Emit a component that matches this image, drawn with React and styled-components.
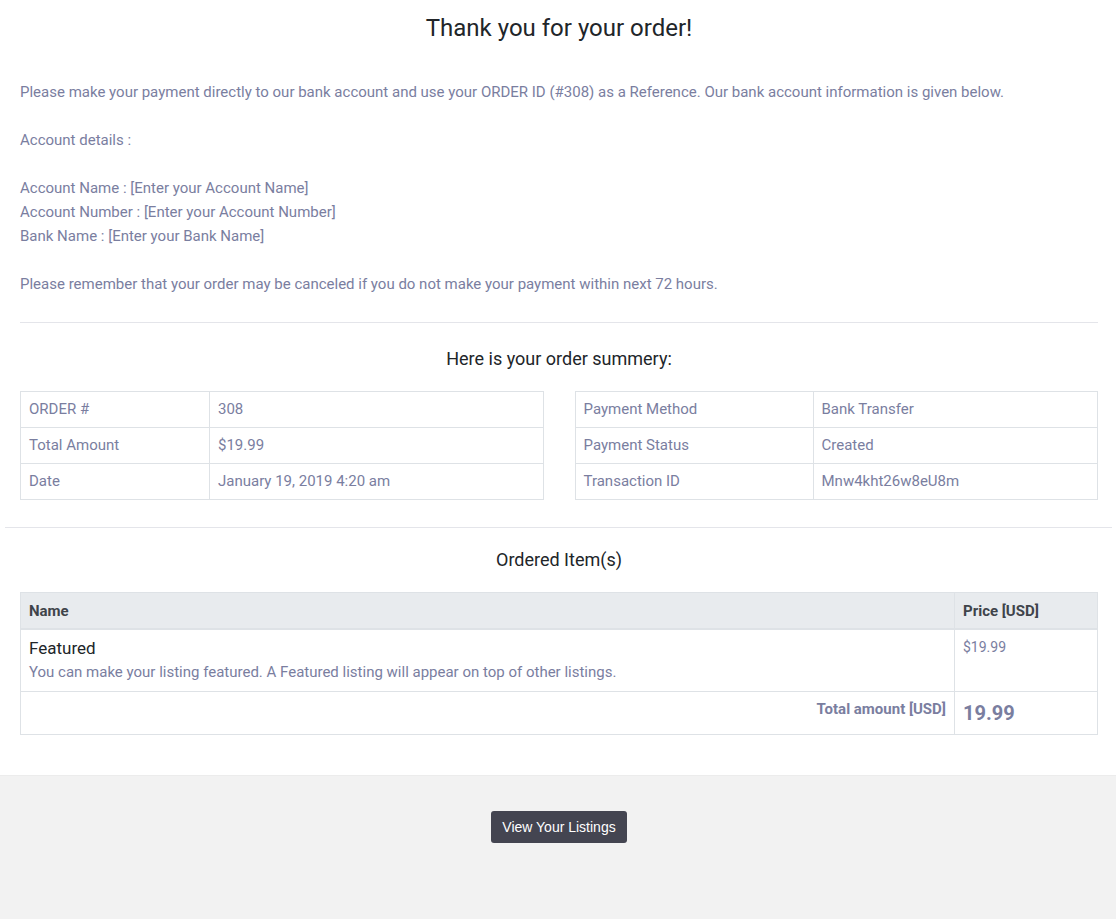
import React from 'react'
import styled, { createGlobalStyle } from 'styled-components'

const GlobalStyle = createGlobalStyle`
  body {
    margin: 0;
    background: #fff;
    font-family: Roboto, "Liberation Sans", Arial, sans-serif;
  }
`

const summaryLeft = [
  ['ORDER #', '308'],
  ['Total Amount', '$19.99'],
  ['Date', 'January 19, 2019 4:20 am'],
]

const summaryRight = [
  ['Payment Method', 'Bank Transfer'],
  ['Payment Status', 'Created'],
  ['Transaction ID', 'Mnw4kht26w8eU8m'],
]

function App() {
  return (
    <>
      <GlobalStyle />
      <Wrapper>
        <Inner>
          <Title>Thank you for your order!</Title>
          <Text>
            Please make your payment directly to our bank account and use your ORDER ID (#308) as a Reference. Our bank account information is given below.
          </Text>
          <Text>Account details :</Text>
          <Text>
            Account Name : [Enter your Account Name]<br />
            Account Number : [Enter your Account Number]<br />
            Bank Name : [Enter your Bank Name]
          </Text>
          <Text>Please remember that your order may be canceled if you do not make your payment within next 72 hours.</Text>
          <Rule />
          <SubTitle $top={25}>Here is your order summery:</SubTitle>
          <SummaryGrid>
            <InfoTable>
              <tbody>
                {summaryLeft.map(([k, v]) => (
                  <tr key={k}>
                    <InfoCell $w="189px">{k}</InfoCell>
                    <InfoCell>{v}</InfoCell>
                  </tr>
                ))}
              </tbody>
            </InfoTable>
            <InfoTable>
              <tbody>
                {summaryRight.map(([k, v]) => (
                  <tr key={k}>
                    <InfoCell $w="238px">{k}</InfoCell>
                    <InfoCell>{v}</InfoCell>
                  </tr>
                ))}
              </tbody>
            </InfoTable>
          </SummaryGrid>
        </Inner>
        <WideRule />
        <Inner>
          <SubTitle $top={21}>Ordered Item(s)</SubTitle>
          <ItemsTable>
            <thead>
              <tr>
                <HeadCell>Name</HeadCell>
                <HeadCell $w="126px">Price [USD]</HeadCell>
              </tr>
            </thead>
            <tbody>
              <tr>
                <ItemCell>
                  <ItemName>Featured</ItemName>
                  <ItemDesc>You can make your listing featured. A Featured listing will appear on top of other listings.</ItemDesc>
                </ItemCell>
                <ItemCell>
                  <Price>$19.99</Price>
                </ItemCell>
              </tr>
              <tr>
                <TotalLabel>Total amount [USD]</TotalLabel>
                <TotalValue>19.99</TotalValue>
              </tr>
            </tbody>
          </ItemsTable>
        </Inner>
      </Wrapper>
      <Footer>
        <ListingsButton>View Your Listings</ListingsButton>
      </Footer>
    </>
  )
}

export default App

const Wrapper = styled.div`
  padding: 0 4px 40px 5px;
  color: #7a7e9f;
`

const Inner = styled.div`
  padding: 0 14px 0 15px;
`

const Title = styled.h1`
  margin: 14px 0 37px;
  font-size: 24px;
  line-height: 29px;
  font-weight: 400;
  color: #212529;
  text-align: center;
`

const Text = styled.p`
  margin: 0 0 24px;
  font-size: 15px;
  line-height: 24px;
`

const Rule = styled.hr`
  margin: 26px 0 0;
  border: 0;
  border-top: 1px solid #e4e5ea;
`

const WideRule = styled(Rule)`
  margin: 27px 0 0;
`

const SubTitle = styled.h3`
  margin: ${p => p.$top}px 0 21px;
  font-size: 18px;
  line-height: 22px;
  font-weight: 400;
  color: #212529;
  text-align: center;
`

const SummaryGrid = styled.div`
  display: grid;
  grid-template-columns: 1fr 1fr;
  gap: 31px;
`

const InfoTable = styled.table`
  width: 100%;
  border-collapse: collapse;
  font-size: 15px;
`

const InfoCell = styled.td`
  width: ${p => p.$w || 'auto'};
  border: 1px solid #dee2e6;
  padding: 0 8px;
  height: 35px;
  line-height: 35px;
  box-sizing: border-box;
  white-space: nowrap;
`

const ItemsTable = styled.table`
  width: 100%;
  border-collapse: collapse;
`

const HeadCell = styled.th`
  width: ${p => p.$w || 'auto'};
  background: #e8ebee;
  border: 1px solid #dee2e6;
  border-bottom-width: 2px;
  padding: 8px 8px 7px;
  line-height: 20px;
  font-size: 15px;
  font-weight: 700;
  color: #3f444a;
  text-align: left;
`

const ItemCell = styled.td`
  border: 1px solid #dee2e6;
  padding: 7px 8px 8px;
  vertical-align: top;
`

const ItemName = styled.div`
  font-size: 17px;
  line-height: 22px;
  color: #212529;
`

const ItemDesc = styled.div`
  font-size: 15px;
  line-height: 22px;
  margin-top: 2px;
`

const Price = styled.div`
  font-size: 14px;
  line-height: 20px;
  margin-top: 0;
`

const TotalLabel = styled.td`
  border: 1px solid #dee2e6;
  padding: 7px 8px 12px;
  text-align: right;
  vertical-align: top;
  font-size: 15px;
  line-height: 20px;
  font-weight: 700;
`

const TotalValue = styled.td`
  border: 1px solid #dee2e6;
  padding: 8px 8px 8px;
  font-size: 20px;
  line-height: 26px;
  font-weight: 700;
  vertical-align: top;
`

const Footer = styled.div`
  background: #f2f2f2;
  border-top: 1px solid #ececec;
  padding: 35px 0 80px;
  display: flex;
  justify-content: center;
`

const ListingsButton = styled.button`
  height: 32px;
  padding: 0 11px;
  margin-left: 2px;
  background: #444551;
  color: #fff;
  border: 0;
  border-radius: 3px;
  font-family: "Liberation Sans", Arial, sans-serif;
  font-size: 14px;
  cursor: pointer;
`
